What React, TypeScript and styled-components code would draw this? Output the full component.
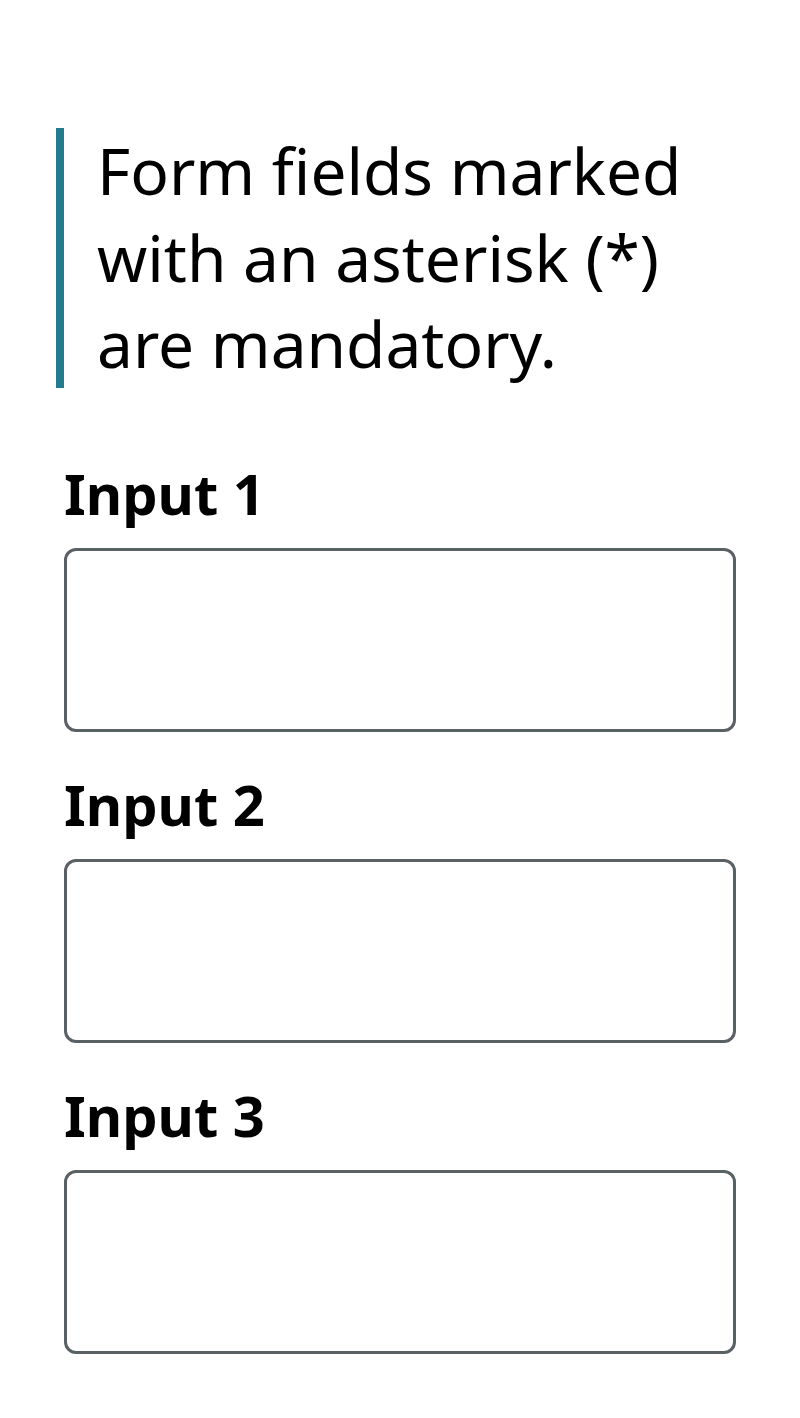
import styled, { createGlobalStyle } from "styled-components";

const Global = createGlobalStyle`
  body {
    margin: 0;
    background: #fff;
    font-family: "Noto Sans", "Open Sans", sans-serif;
    color: #000;
  }
`;

const Page = styled.main`
  padding: 128px 64px 40px;
`;

const Note = styled.blockquote`
  margin: 0 0 0 -8px;
  border-left: 8px solid #237b8e;
  padding: 0 0 0 33px;
  font-size: 64px;
  line-height: 86.67px;
`;

const Field = styled.div<{ $first?: boolean }>`
  display: flex;
  flex-direction: column;
  margin-top: ${(p) => (p.$first ? "67px" : "34px")};
`;

const Label = styled.label`
  font-size: 56px;
  font-weight: 700;
  line-height: 76px;
  margin-bottom: 17px;
`;

const Input = styled.input`
  box-sizing: border-box;
  height: 184px;
  width: 100%;
  border: 3px solid #5a6164;
  border-radius: 12px;
  background: #fff;
`;

export default function App() {
  return (
    <>
      <Global />
      <Page>
        <Note>Form fields marked with an asterisk (*) are mandatory.</Note>
        {["Input 1", "Input 2", "Input 3"].map((l, i) => (
          <Field key={l} $first={i === 0}>
            <Label htmlFor={`in${i}`}>{l}</Label>
            <Input id={`in${i}`} />
          </Field>
        ))}
      </Page>
    </>
  );
}
